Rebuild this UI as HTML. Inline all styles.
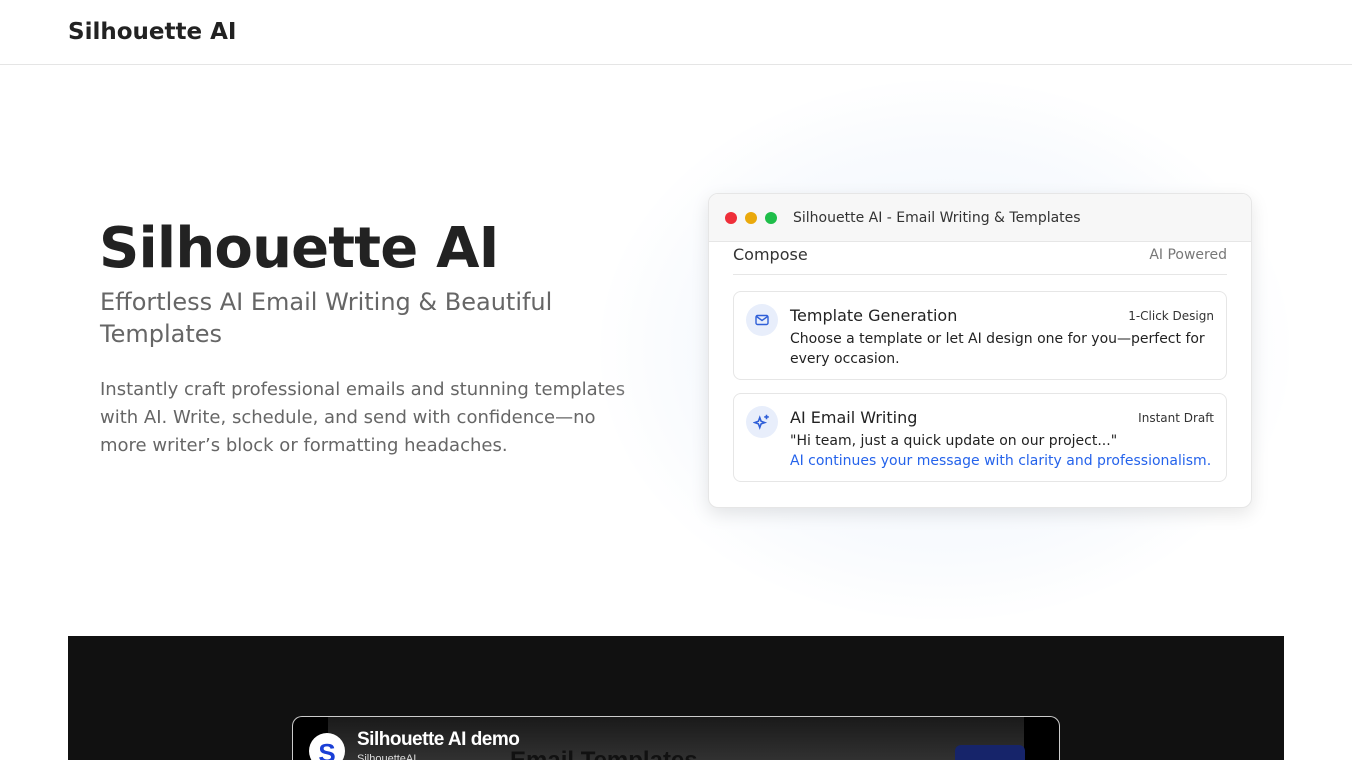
<!DOCTYPE html>
<html><head><style>
*{margin:0;padding:0;box-sizing:border-box}
html,body{width:1352px;height:760px;overflow:hidden}
body{background:#fff;font-family:"DejaVu Sans","Liberation Sans",sans-serif;color:#222;position:relative}
.hdr{height:65px;border-bottom:1px solid #e5e5e5;position:relative}
.hdr b{position:absolute;left:68px;top:19px;font-size:23px;color:#222}
h1{position:absolute;left:99px;top:216px;font-size:56px;font-weight:bold;letter-spacing:-0.8px;color:#222}
.sub{position:absolute;left:100px;top:286px;width:540px;font-size:24px;line-height:32px;color:#666}
.p{position:absolute;left:100px;top:376px;width:540px;font-size:18px;line-height:28px;color:#666}
.glow{position:absolute;left:600px;top:80px;width:690px;height:540px;border-radius:50%;background:radial-gradient(ellipse at center,rgba(225,235,250,.6) 0%,rgba(240,245,252,.4) 55%,rgba(255,255,255,0) 72%)}
.card{position:absolute;left:708px;top:193px;width:544px;height:315px;background:#fff;border:1px solid #e6e6e6;border-radius:10px;box-shadow:0 6px 18px rgba(0,0,0,.1);overflow:hidden}
.ch{height:48px;background:#f7f7f7;border-bottom:1px solid #e6e6e6;position:relative;font-size:14px;color:#333}
.dot{position:absolute;top:18px;width:12px;height:12px;border-radius:50%}
.ch span{position:absolute;left:84px;top:16px}
.comp{position:absolute;left:24px;right:24px;top:48px;height:33px;border-bottom:1px solid #e6e6e6}
.comp .l{position:absolute;left:0;top:3px;font-size:16px;color:#333}
.comp .r{position:absolute;right:0;top:5px;font-size:14px;color:#777}
.it{position:absolute;left:24px;width:494px;height:89px;border:1px solid #e6e6e6;border-radius:8px}
.ic{position:absolute;left:12px;top:12px;width:32px;height:32px;border-radius:50%;background:#e8eefb;display:flex;align-items:center;justify-content:center}
.t{position:absolute;left:56px;top:14px;font-size:16px;color:#222}
.tg{position:absolute;right:12px;top:17px;font-size:12px;color:#333}
.d{position:absolute;left:56px;top:37px;width:425px;font-size:14px;line-height:20px;color:#222}
.blk{position:absolute;left:68px;top:636px;width:1216px;height:124px;background:#111}
.vid{position:absolute;left:292px;top:716px;width:768px;height:44px;border:1px solid #ccc;border-bottom:none;border-radius:10px 10px 0 0;background:#000;overflow:hidden}
.vin{position:absolute;left:35px;top:0;width:696px;height:60px;background:linear-gradient(#1a1a1a,#3a3a3a)}
</style></head><body>
<div class="hdr"><b>Silhouette AI</b></div>
<h1>Silhouette AI</h1>
<div class="sub">Effortless AI Email Writing &amp; Beautiful Templates</div>
<div class="p">Instantly craft professional emails and stunning templates with AI. Write, schedule, and send with confidence—no more writer’s block or formatting headaches.</div>
<div class="glow"></div>
<div class="card">
<div class="ch"><i class="dot" style="left:16px;background:#ef2f3a"></i><i class="dot" style="left:36px;background:#eaa90c"></i><i class="dot" style="left:56px;background:#1fbe4a"></i><span>Silhouette AI - Email Writing &amp; Templates</span></div>
<div class="comp"><span class="l">Compose</span><span class="r">AI Powered</span></div>
<div class="it" style="top:97px"><div class="ic"><svg width="16" height="16" viewBox="0 0 16 16" fill="none" stroke="#2f5fd8" stroke-width="1.4"><rect x="2" y="3.5" width="12" height="9" rx="1.5"/><path d="M2.5 4.5L8 8.5l5.5-4"/></svg></div><div class="t">Template Generation</div><div class="tg">1-Click Design</div><div class="d">Choose a template or let AI design one for you—perfect for every occasion.</div></div>
<div class="it" style="top:199px"><div class="ic"><svg width="18" height="18" viewBox="0 0 16 16" fill="none" stroke="#2f5fd8" stroke-width="1.4"><path d="M6 4l1.2 3.3L10.5 8.5 7.2 9.7 6 13 4.8 9.7 1.5 8.5 4.8 7.3z"/><path d="M12 1.5v4M10 3.5h4"/></svg></div><div class="t">AI Email Writing</div><div class="tg">Instant Draft</div><div class="d">"Hi team, just a quick update on our project..."<br><span style="color:#2563eb">AI continues your message with clarity and professionalism.</span></div></div>
</div>
<div class="blk"></div>
<div class="vid"><div class="vin"></div>
<div style="position:absolute;left:16px;top:16px;width:36px;height:36px;border-radius:50%;background:#fff;color:#1a3fd6;font:bold 26px 'Liberation Sans',sans-serif;text-align:center;line-height:40px">S</div>
<div style="position:absolute;left:64px;top:12px;color:#fff;font:bold 19px 'Liberation Sans',sans-serif;letter-spacing:-0.5px">Silhouette AI demo</div>
<div style="position:absolute;left:64px;top:36px;color:#ddd;font:11px 'Liberation Sans',sans-serif">SilhouetteAI</div>
<div style="position:absolute;left:217px;top:30px;color:#111;font:bold 24px 'Liberation Sans',sans-serif">Email Templates</div>
<div style="position:absolute;left:662px;top:28px;width:70px;height:40px;border-radius:6px;background:#16246a"></div>
</div>
</body></html>
